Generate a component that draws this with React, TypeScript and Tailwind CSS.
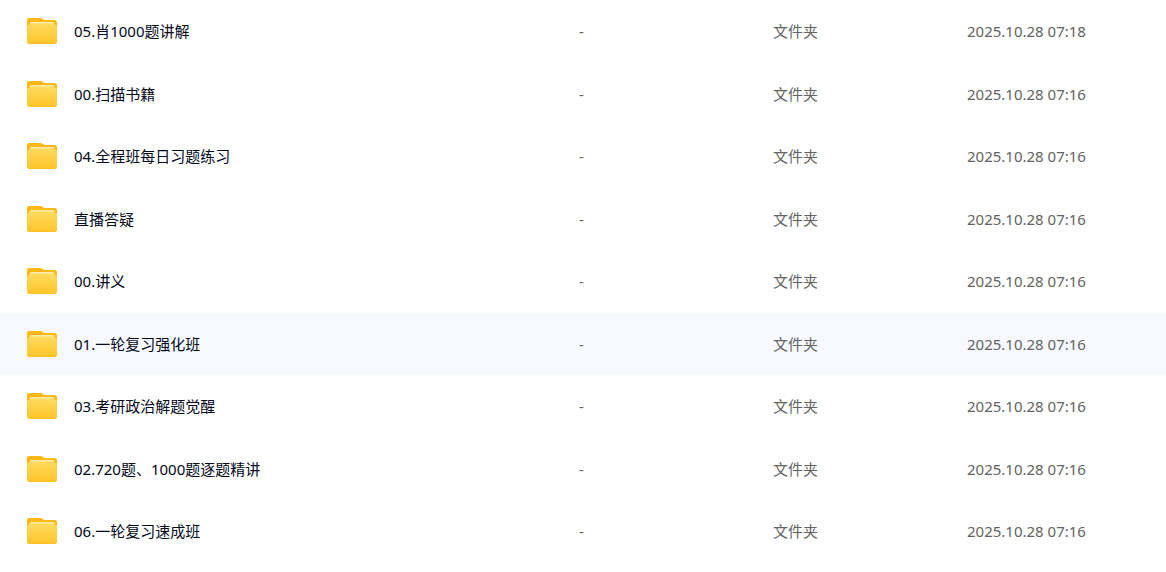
import { useState } from 'react';

interface FileEntry {
  name: string;
  size: string;
  type: string;
  modified: string;
}

const files: FileEntry[] = [
  { name: '05.肖1000题讲解', size: '-', type: '文件夹', modified: '2025.10.28 07:18' },
  { name: '00.扫描书籍', size: '-', type: '文件夹', modified: '2025.10.28 07:16' },
  { name: '04.全程班每日习题练习', size: '-', type: '文件夹', modified: '2025.10.28 07:16' },
  { name: '直播答疑', size: '-', type: '文件夹', modified: '2025.10.28 07:16' },
  { name: '00.讲义', size: '-', type: '文件夹', modified: '2025.10.28 07:16' },
  { name: '01.一轮复习强化班', size: '-', type: '文件夹', modified: '2025.10.28 07:16' },
  { name: '03.考研政治解题觉醒', size: '-', type: '文件夹', modified: '2025.10.28 07:16' },
  { name: '02.720题、1000题逐题精讲', size: '-', type: '文件夹', modified: '2025.10.28 07:16' },
  { name: '06.一轮复习速成班', size: '-', type: '文件夹', modified: '2025.10.28 07:16' },
];

function FolderIcon() {
  return (
    <svg viewBox="0 0 30 26" className="w-[30px] h-[26px] shrink-0" aria-hidden="true">
      <defs>
        <linearGradient id="folder-front" x1="0" y1="0" x2="0" y2="1">
          <stop offset="0" stopColor="#ffdb60" />
          <stop offset="1" stopColor="#ffc62d" />
        </linearGradient>
        <linearGradient id="folder-shine" x1="0" y1="0" x2="0" y2="1">
          <stop offset="0" stopColor="#ffefc0" />
          <stop offset="1" stopColor="#ffdb60" />
        </linearGradient>
      </defs>
      <path
        d="M0 2.2C0 .9.9 0 2.2 0h11.2c.8 0 1.4.2 2 .7l1.2.9c.4.3.8.4 1.3.4h9.5C29 2 30 3 30 4.5V23.5c0 1.5-1 2.5-2.5 2.5h-25C1 26 0 25 0 23.5z"
        fill="#ffb816"
      />
      <path
        d="M0 8.5C0 7.500.6 6.900 1.600 6.900 2.300 6.900 2.500 6.500 2.600 5.800 2.800 4.500 3.500 4 4.800 4h20.400c1.300 0 2 .5 2.200 1.800.1.7.3 1.100 1 1.100 1 0 1.600.6 1.600 1.600v14.400c0 1.500-1 2.500-2.500 2.500h-25C1 25.400 0 24.400 0 22.900z"
        fill="url(#folder-front)"
      />
      <path d="M2.700 6.300C2.800 4.700 3.500 4 4.800 4h20.400c1.300 0 2 .7 2.100 2.300z" fill="url(#folder-shine)" />
    </svg>
  );
}

export default function App() {
  const [selected, setSelected] = useState(5);

  return (
    <main className="min-h-screen bg-white font-['Noto_Sans','Noto_Sans_CJK_SC',sans-serif] text-[15px] leading-[26px]">
      <table className="w-full table-fixed border-collapse text-left">
        <colgroup>
          <col />
          <col className="w-[194px]" />
          <col className="w-[194px]" />
          <col className="w-[199px]" />
        </colgroup>
        <tbody>
          {files.map((file, i) => (
            <tr
              key={file.name}
              onClick={() => setSelected(i)}
              className={`odd:h-[63px] even:h-[62px] align-top text-[#636363] ${i === selected ? 'bg-[#f7f9fe]' : ''}`}
            >
              <td className="p-0 pt-[18px] pl-[27px]">
                <a href="#" className="flex items-center gap-[17px] text-[#03081a]">
                  <FolderIcon />
                  <span className="truncate">{file.name}</span>
                </a>
              </td>
              <td className="p-0 pt-[18px]">{file.size}</td>
              <td className="p-0 pt-[18px]">{file.type}</td>
              <td className="p-0 pt-[18px] whitespace-nowrap">{file.modified}</td>
            </tr>
          ))}
        </tbody>
      </table>
    </main>
  );
}
